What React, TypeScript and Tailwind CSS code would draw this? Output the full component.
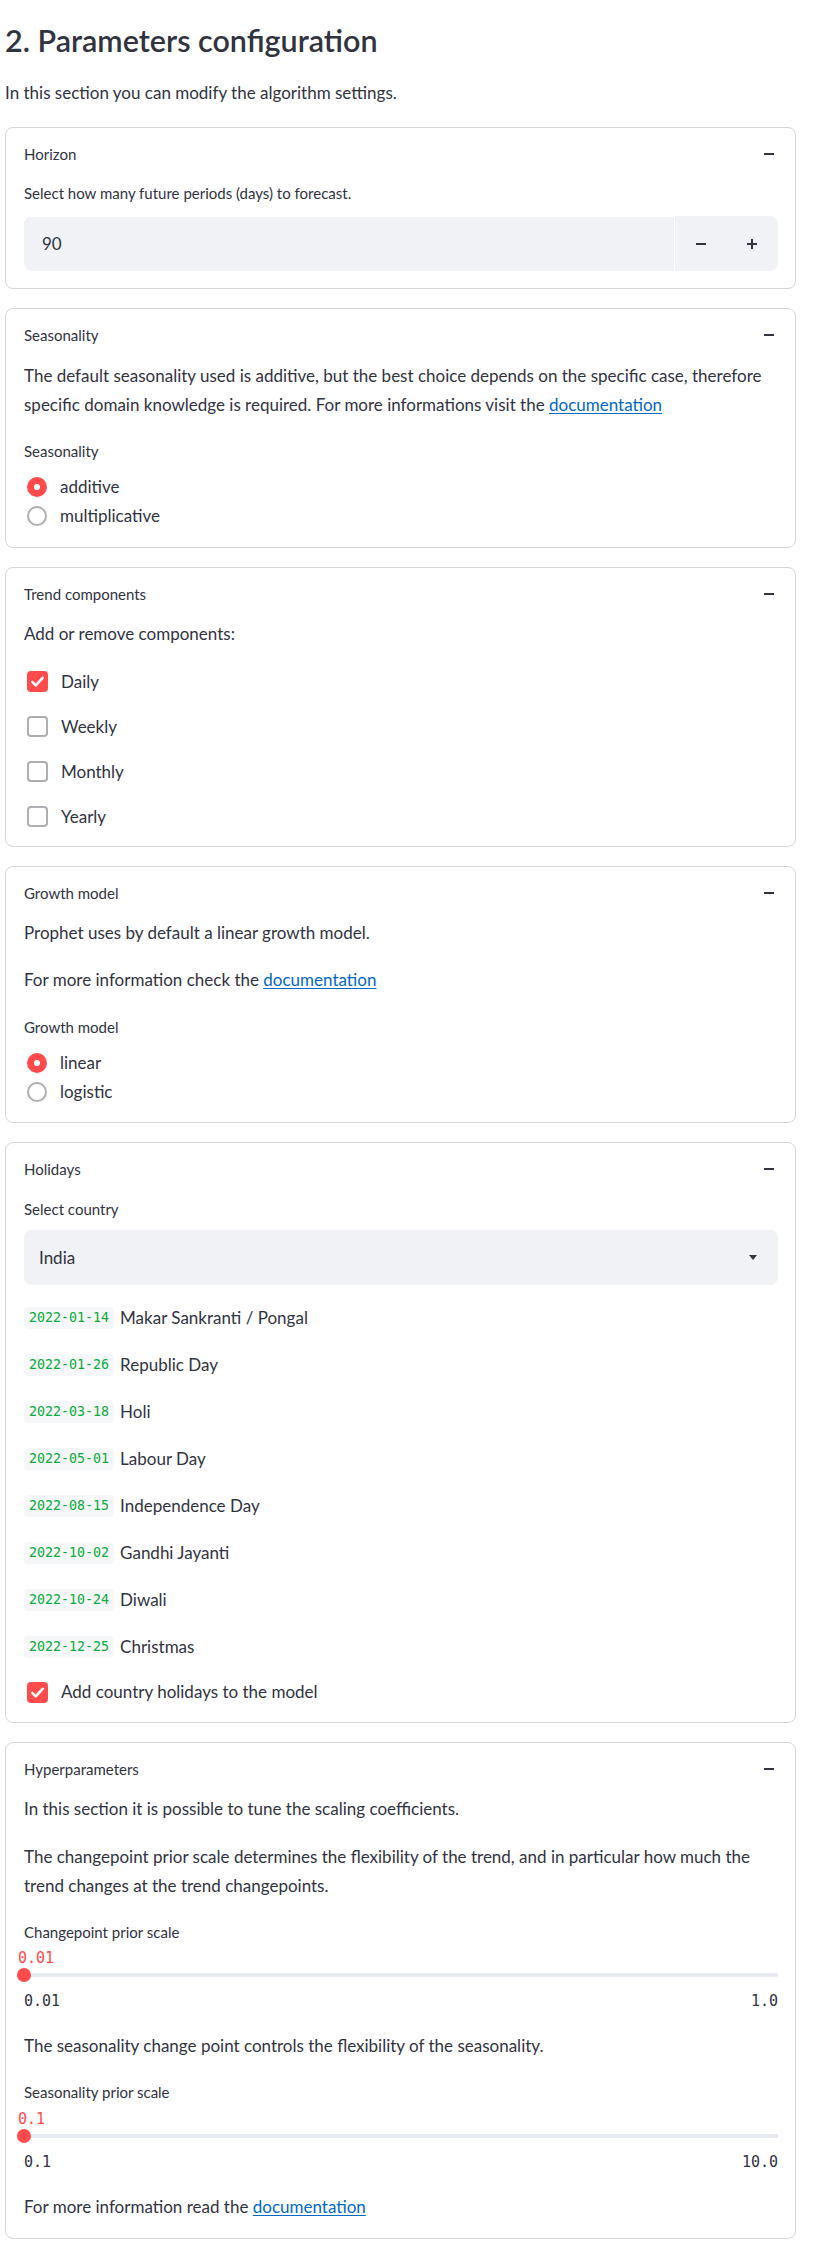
import React from "react";

const TEXT = "text-[#31333f]";

function MinusIcon() {
  return (
    <svg width="10" height="2" viewBox="0 0 10 2" className="mr-[4px]">
      <rect x="0" y="0" width="10" height="2" fill="#31333f" />
    </svg>
  );
}

function Header({ title }: { title: string }) {
  return (
    <div className="mt-[16px] flex h-[20px] items-center justify-between">
      <span className="text-[15px]">{title}</span>
      <MinusIcon />
    </div>
  );
}

function Card({ children }: { children: React.ReactNode }) {
  return (
    <div className="rounded-[8px] border border-[#d6d6d9] bg-white pl-[18px] pr-[17px]">
      {children}
    </div>
  );
}

function Radio({ checked, label }: { checked: boolean; label: string }) {
  return (
    <div className="flex h-[29px] items-center">
      {checked ? (
        <span className="ml-[3px] flex h-[20px] w-[20px] items-center justify-center rounded-full bg-[#ff4b4b]">
          <span className="h-[6px] w-[6px] rounded-full bg-white" />
        </span>
      ) : (
        <span className="ml-[3px] h-[20px] w-[20px] rounded-full border-2 border-[#adaeb2] bg-white" />
      )}
      <span className="ml-[13px] text-[17px]">{label}</span>
    </div>
  );
}

function Checkbox({ checked, label, h }: { checked: boolean; label: string; h: string }) {
  return (
    <div className={`flex items-center ${h}`}>
      {checked ? (
        <span className="ml-[3px] flex h-[21px] w-[21px] items-center justify-center rounded-[4px] bg-[#ff4b4b]">
          <svg width="21" height="21" viewBox="0 0 21 21">
            <path d="M5.2 10.8 L8.8 14.4 L15.6 6.8" fill="none" stroke="#fff" strokeWidth="2.6" strokeLinecap="round" strokeLinejoin="round" />
          </svg>
        </span>
      ) : (
        <span className="ml-[3px] h-[21px] w-[21px] rounded-[4px] border-2 border-[#adaeb2] bg-white" />
      )}
      <span className="ml-[13px] text-[17px]">{label}</span>
    </div>
  );
}

function Link({ children }: { children: React.ReactNode }) {
  return <span className="text-[#0068c9] underline underline-offset-[2px]">{children}</span>;
}

function Holiday({ date, name }: { date: string; name: string }) {
  return (
    <div className="flex h-[47px] items-center text-[17px]">
      <span className="inline-flex h-[22px] items-center rounded-[4px] bg-[#f6f7f9] px-[5px] font-['DejaVu_Sans_Mono','Liberation_Mono',monospace] text-[13.3px] text-[#09ab3b]">
        {date}
      </span>
      <span className="ml-[6px]">{name}</span>
    </div>
  );
}

function Slider({ value, min, max, first }: { value: string; min: string; max: string; first: boolean }) {
  return (
    <div>
      <div className={`${first ? "mt-[6px]" : "mt-[7px]"} -ml-[6px] flex h-[20px] items-center font-['DejaVu_Sans_Mono','Liberation_Mono',monospace] text-[15px] text-[#ff4b4b]`}>
        {value}
      </div>
      <div className="relative flex h-[14px] items-center">
        <div className="h-[4px] w-full rounded-full bg-[#e6e9ef]" />
        <div className="absolute left-[-7px] top-0 h-[14px] w-[14px] rounded-full bg-[#ff4b4b]" />
      </div>
      <div className="mt-[9px] flex h-[20px] items-center justify-between font-['DejaVu_Sans_Mono','Liberation_Mono',monospace] text-[15px]">
        <span>{min}</span>
        <span>{max}</span>
      </div>
    </div>
  );
}

export default function App() {
  const holidays = [
    ["2022-01-14", "Makar Sankranti / Pongal"],
    ["2022-01-26", "Republic Day"],
    ["2022-03-18", "Holi"],
    ["2022-05-01", "Labour Day"],
    ["2022-08-15", "Independence Day"],
    ["2022-10-02", "Gandhi Jayanti"],
    ["2022-10-24", "Diwali"],
    ["2022-12-25", "Christmas"],
  ];
  return (
    <div className={`min-h-[2256px] w-[820px] bg-white font-['Lato','Noto_Sans',sans-serif] ${TEXT}`}>
      <div className="ml-[5px] w-[791px] pb-[16px]">
        <div className="mt-[20px] flex h-[40px] items-center text-[30.5px] font-semibold leading-none">
          2. Parameters configuration
        </div>
        <div className="mt-[19px] flex h-[28px] items-center text-[17px]">
          In this section you can modify the algorithm settings.
        </div>

        <div className="mt-[20px] flex flex-col gap-[19px]">
          {/* Horizon */}
          <Card>
            <Header title="Horizon" />
            <div className="mt-[19px] flex h-[20px] items-center text-[15px]">
              Select how many future periods (days) to forecast.
            </div>
            <div className="mt-[13px] flex h-[55px] overflow-hidden rounded-[8px] bg-[#f0f2f6]">
              <div className="flex flex-1 items-center border-r border-t border-white pl-[18px] text-[17px]">90</div>
              <div className="flex w-[103px]">
                <div className="flex flex-1 items-center justify-center">
                  <svg width="10" height="2" viewBox="0 0 10 2">
                    <rect width="10" height="2" fill="#31333f" />
                  </svg>
                </div>
                <div className="flex flex-1 items-center justify-center">
                  <svg width="10" height="10" viewBox="0 0 10 10">
                    <rect x="0" y="4" width="10" height="2" fill="#31333f" />
                    <rect x="4" y="0" width="2" height="10" fill="#31333f" />
                  </svg>
                </div>
              </div>
            </div>
            <div className="h-[17px]" />
          </Card>

          {/* Seasonality */}
          <Card>
            <Header title="Seasonality" />
            <div className="mt-[16px] whitespace-nowrap text-[17px] leading-[29px]">
              The default seasonality used is additive, but the best choice depends on the specific case, therefore
              <br />
              specific domain knowledge is required. For more informations visit the <Link>documentation</Link>
            </div>
            <div className="mt-[22px] flex h-[20px] items-center text-[15px]">Seasonality</div>
            <div className="mt-[11px]">
              <Radio checked label="additive" />
              <Radio checked={false} label="multiplicative" />
            </div>
            <div className="h-[17px]" />
          </Card>

          {/* Trend components */}
          <Card>
            <Header title="Trend components" />
            <div className="mt-[16px] flex h-[28px] items-center text-[17px]">Add or remove components:</div>
            <div className="mt-[11px]">
              <Checkbox h="h-[45px]" checked label="Daily" />
              <Checkbox h="h-[45px]" checked={false} label="Weekly" />
              <Checkbox h="h-[45px]" checked={false} label="Monthly" />
              <Checkbox h="h-[45px]" checked={false} label="Yearly" />
            </div>
            <div className="h-[7px]" />
          </Card>

          {/* Growth model */}
          <Card>
            <Header title="Growth model" />
            <div className="mt-[16px] flex h-[28px] items-center text-[17px]">
              Prophet uses by default a linear growth model.
            </div>
            <div className="mt-[19px] flex h-[28px] items-center whitespace-pre text-[17px]">
              For more information check the <Link>documentation</Link>
            </div>
            <div className="mt-[23px] flex h-[20px] items-center text-[15px]">Growth model</div>
            <div className="mt-[11px]">
              <Radio checked label="linear" />
              <Radio checked={false} label="logistic" />
            </div>
            <div className="h-[16px]" />
          </Card>

          {/* Holidays */}
          <Card>
            <Header title="Holidays" />
            <div className="mt-[20px] flex h-[20px] items-center text-[15px]">Select country</div>
            <div className="mt-[11px] flex h-[55px] items-center justify-between rounded-[8px] bg-[#f0f2f6] pl-[15px] pr-[21px] text-[17px]">
              <span>India</span>
              <svg width="8" height="5" viewBox="0 0 8 5">
                <path d="M0 0 L8 0 L4 5 Z" fill="#31333f" />
              </svg>
            </div>
            <div className="mt-[9px]">
              {holidays.map(([d, n]) => (
                <Holiday key={d} date={d} name={n} />
              ))}
            </div>
            <Checkbox h="h-[44px]" checked label="Add country holidays to the model" />
            <div className="h-[8px]" />
          </Card>

          {/* Hyperparameters */}
          <Card>
            <Header title="Hyperparameters" />
            <div className="mt-[16px] flex h-[28px] items-center text-[17px]">
              In this section it is possible to tune the scaling coefficients.
            </div>
            <div className="mt-[19px] whitespace-nowrap text-[17px] leading-[29px]">
              The changepoint prior scale determines the flexibility of the trend, and in particular how much the
              <br />
              trend changes at the trend changepoints.
            </div>
            <div className="mt-[22px] flex h-[20px] items-center text-[15px]">Changepoint prior scale</div>
            <Slider first value="0.01" min="0.01" max="1.0" />
            <div className="mt-[21px] flex h-[28px] items-center text-[17px]">
              The seasonality change point controls the flexibility of the seasonality.
            </div>
            <div className="mt-[22px] flex h-[20px] items-center text-[15px]">Seasonality prior scale</div>
            <Slider first={false} value="0.1" min="0.1" max="10.0" />
            <div className="mt-[21px] flex h-[28px] items-center whitespace-pre text-[17px]">
              For more information read the <Link>documentation</Link>
            </div>
            <div className="h-[17px]" />
          </Card>
        </div>
      </div>
    </div>
  );
}
